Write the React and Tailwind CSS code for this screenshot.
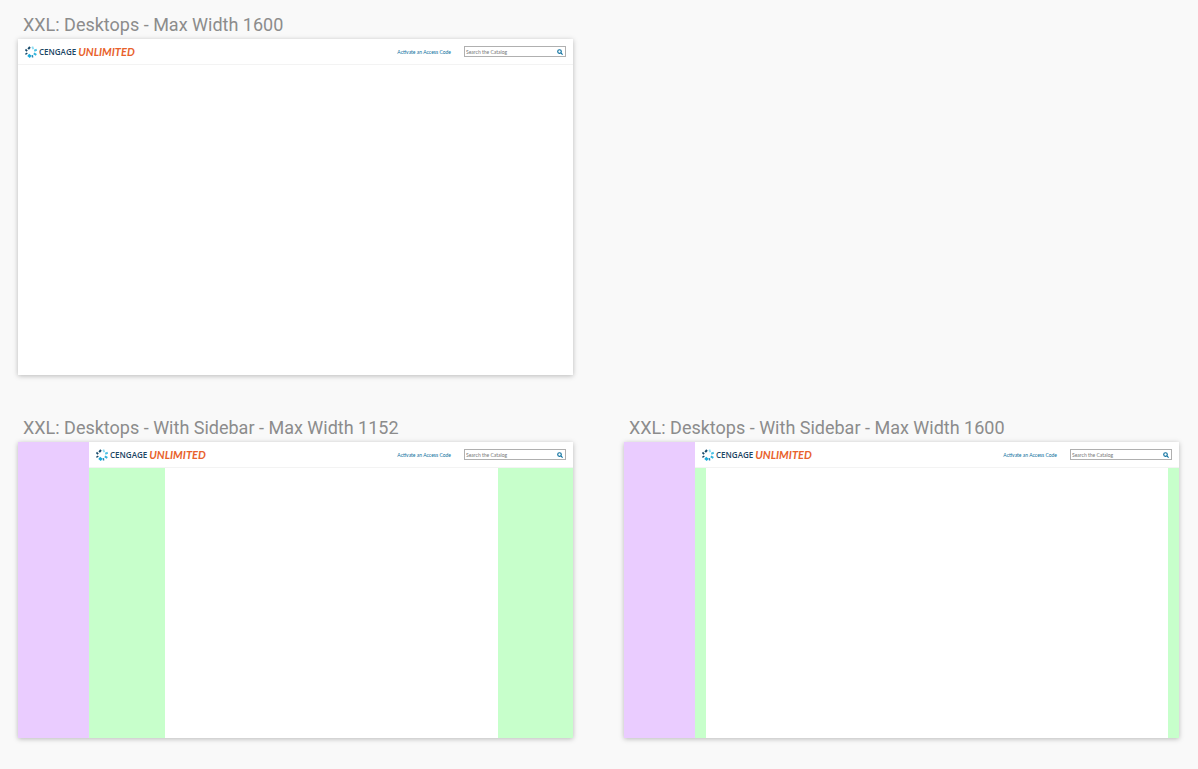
function LogoMark() {
  return (
    <svg viewBox="0 0 24 24" className="size-3 shrink-0" aria-hidden="true">
      <g fill="none" strokeWidth="4">
        <path d="M6.4 6.2 10 2" stroke="#174a6b" />
        <path d="M14.6 1.4 16.6 6.2" stroke="#8adcf2" strokeWidth="3.6" />
        <path d="M18.4 9.6 23.6 7.6" stroke="#4cc3e6" />
        <path d="M17.6 14.8 22.6 17.8" stroke="#2fb4dd" />
        <path d="M14.6 18.4 15.2 23" stroke="#2a86b0" strokeWidth="3" />
        <path d="M6.4 17.6 11.4 21.6" stroke="#18a9da" strokeWidth="6" />
        <path d="M0.8 16.8 4.6 14" stroke="#174a6b" strokeWidth="3" />
        <path d="M0.8 7 4.2 10.4" stroke="#174a6b" strokeWidth="3.6" />
      </g>
    </svg>
  );
}

function SearchIcon() {
  return (
    <svg viewBox="0 0 12 12" className="size-[6px]" fill="none" stroke="#0a6f9e" strokeWidth="2.3" aria-hidden="true">
      <circle cx="5" cy="5" r="3.6" />
      <path d="m7.8 7.8 3.4 3.4" />
    </svg>
  );
}

function SiteHeader() {
  return (
    <header className="flex h-[26px] items-center border-b border-[#f3f3f3] bg-white px-[7px]">
      <a href="#" className="flex items-center gap-[2px] whitespace-nowrap">
        <LogoMark />
        <span className="font-['Open_Sans',sans-serif] text-[8px] leading-3 font-semibold text-[#1c4563]">CENGAGE</span>
        <span className="font-['Lato',sans-serif] text-[11px] leading-3 font-bold text-[#e8622c] italic">UNLIMITED</span>
      </a>
      <a href="#" className="ml-auto font-['Lato',sans-serif] text-[5px] leading-2 whitespace-nowrap text-[#0a6f9e]">
        Activate an Access Code
      </a>
      <form className="ml-[13px] flex h-[11px] w-[102px] items-center border border-[#b0b0b0] bg-white pr-[2px] pl-px">
        <input
          type="text"
          aria-label="Search the Catalog"
          placeholder="Search the Catalog"
          className="h-2 min-w-0 flex-1 bg-transparent font-['Lato',sans-serif] text-[5px] leading-2 outline-none placeholder:text-[#777777]"
        />
        <button type="button" aria-label="Search">
          <SearchIcon />
        </button>
      </form>
    </header>
  );
}

function Artboard({ title, ratio, sidebar, gutter }) {
  return (
    <section>
      <h2 className="mb-[2px] ml-[5px] font-['Roboto',sans-serif] text-[18px] leading-[25px] whitespace-nowrap text-[#8c8c8c]">{title}</h2>
      <div className={`flex bg-white shadow-[0_1px_5px_rgba(0,0,0,0.26)] ${ratio}`}>
        {sidebar && <aside className="w-[12.8%] bg-[#eaccff]" />}
        <div className="flex min-w-0 flex-1 flex-col">
          <SiteHeader />
          {gutter && (
            <div className="flex flex-1 justify-between">
              <div className={`bg-[#c7ffcb] ${gutter}`} />
              <div className={`bg-[#c7ffcb] ${gutter}`} />
            </div>
          )}
        </div>
      </div>
    </section>
  );
}

export default function App() {
  return (
    <main className="grid min-h-screen grid-cols-2 content-start gap-x-[51px] gap-y-10 bg-[#f9f9f9] pt-3 pr-[19px] pb-7 pl-[18px]">
      <div className="col-span-2 grid grid-cols-subgrid">
        <Artboard title="XXL: Desktops - Max Width 1600" ratio="aspect-[555/336]" />
      </div>
      <Artboard
        title="XXL: Desktops - With Sidebar - Max Width 1152"
        ratio="aspect-[555/296]"
        sidebar
        gutter="w-[15.6%]"
      />
      <Artboard
        title="XXL: Desktops - With Sidebar - Max Width 1600"
        ratio="aspect-[555/296]"
        sidebar
        gutter="w-[2.2%]"
      />
    </main>
  );
}
